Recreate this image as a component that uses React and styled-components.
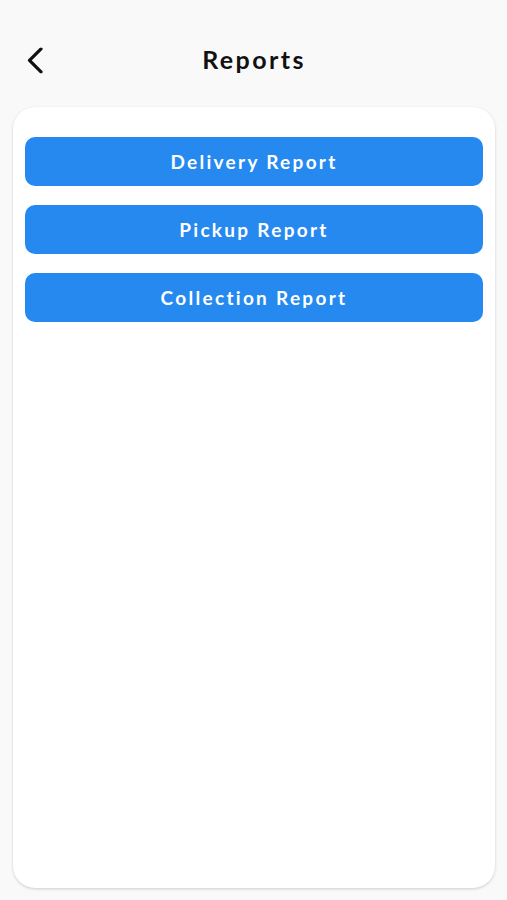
import React from "react";
import styled, { createGlobalStyle } from "styled-components";

const GlobalStyle = createGlobalStyle`
  html, body {
    margin: 0;
    padding: 0;
    background: #f9f9f9;
    font-family: Lato, "Open Sans", sans-serif;
  }
`;

const Screen = styled.div`
  width: 507px;
  height: 900px;
  background: #f9f9f9;
  display: flex;
  flex-direction: column;
  box-sizing: border-box;
  padding: 0 12px 12px 13px;
`;

const StatusBar = styled.div`
  height: 30px;
  flex-shrink: 0;
`;

const Header = styled.div`
  height: 61px;
  display: flex;
  align-items: center;
  justify-content: center;
  position: relative;
  flex-shrink: 0;
`;

const BackButton = styled.button`
  position: absolute;
  left: 13px;
  top: 50%;
  transform: translateY(-52%);
  background: none;
  border: none;
  padding: 0;
  width: 18px;
  height: 28px;
  display: flex;
  align-items: center;
  justify-content: center;
  cursor: pointer;
`;

const Title = styled.h1`
  margin: 0 0 4px;
  font-size: 25px;
  font-weight: 700;
  letter-spacing: 2.4px;
  color: #111;
`;

const Card = styled.div`
  margin-top: 16px;
  flex: 1;
  background: #fff;
  border-radius: 22px;
  box-shadow: 0 1px 3px rgba(0, 0, 0, 0.18);
  padding: 30px 12px;
  display: flex;
  flex-direction: column;
  gap: 19px;
`;

const ReportButton = styled.button`
  height: 49px;
  border: none;
  border-radius: 10px;
  background: #2589f0;
  color: #fff;
  font-family: Lato, "Open Sans", sans-serif;
  font-size: 19px;
  font-weight: 700;
  letter-spacing: 2.3px;
  cursor: pointer;
`;

const reports = ["Delivery Report", "Pickup Report", "Collection Report"];

export default function App() {
  return (
    <>
      <GlobalStyle />
      <Screen>
        <StatusBar />
        <Header>
          <BackButton aria-label="Back">
            <svg width="16" height="26" viewBox="0 0 16 26" fill="none">
              <path
                d="M14 1.5 L2.5 13 L14 24.5"
                stroke="#111"
                strokeWidth="3.2"
                strokeLinecap="round"
                strokeLinejoin="round"
              />
            </svg>
          </BackButton>
          <Title>Reports</Title>
        </Header>
        <Card>
          {reports.map((r) => (
            <ReportButton key={r}>{r}</ReportButton>
          ))}
        </Card>
      </Screen>
    </>
  );
}
